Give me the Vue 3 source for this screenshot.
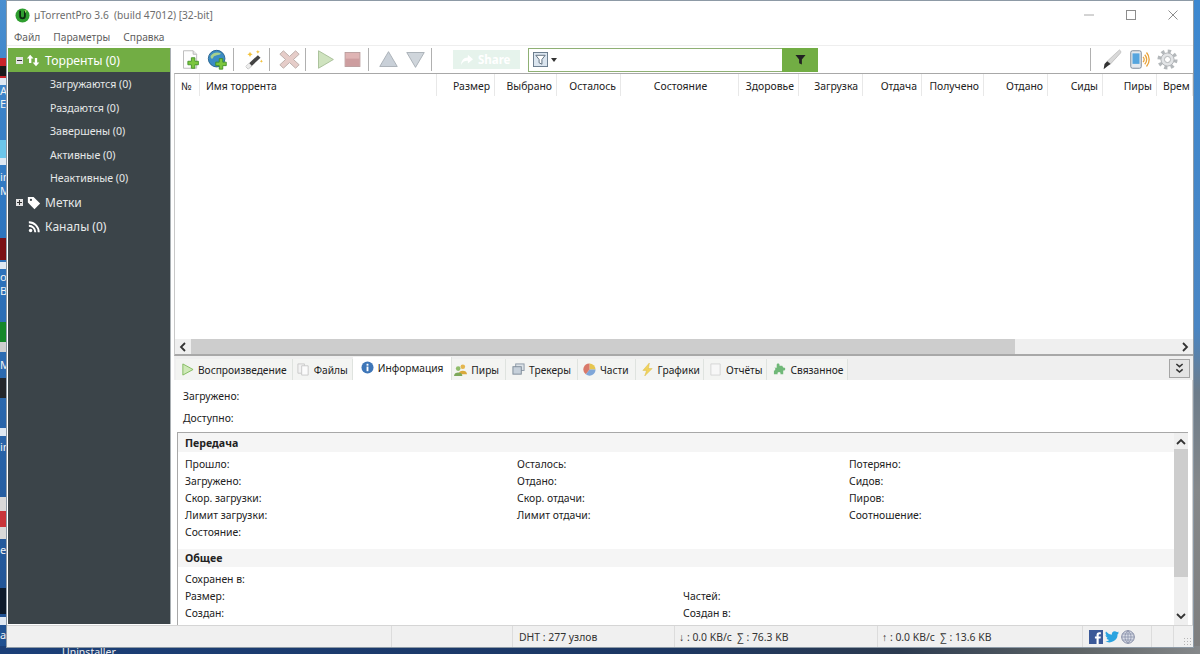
<script setup>
const sideItems = ['Загружаются (0)', 'Раздаются (0)', 'Завершены (0)', 'Активные (0)', 'Неактивные (0)']

const columns = [
  { title: '№', width: 25, align: 'left' },
  { title: 'Имя торрента', width: 237, align: 'left' },
  { title: 'Размер', width: 58 },
  { title: 'Выбрано', width: 62 },
  { title: 'Осталось', width: 64 },
  { title: 'Состояние', width: 118, align: 'center' },
  { title: 'Здоровье', width: 60 },
  { title: 'Загрузка', width: 64 },
  { title: 'Отдача', width: 59 },
  { title: 'Получено', width: 62 },
  { title: 'Отдано', width: 64 },
  { title: 'Сиды', width: 55 },
  { title: 'Пиры', width: 54 },
  { title: 'Врем', width: 36, align: 'left' }
]

const tabs = [
  { key: 'play', title: 'Воспроизведение' },
  { key: 'files', title: 'Файлы' },
  { key: 'info', title: 'Информация', active: true },
  { key: 'peers', title: 'Пиры' },
  { key: 'trackers', title: 'Трекеры' },
  { key: 'pieces', title: 'Части' },
  { key: 'graphs', title: 'Графики' },
  { key: 'reports', title: 'Отчёты' },
  { key: 'related', title: 'Связанное' }
]

const transfer = [
  ['Прошло:', 'Осталось:', 'Потеряно:'],
  ['Загружено:', 'Отдано:', 'Сидов:'],
  ['Скор. загрузки:', 'Скор. отдачи:', 'Пиров:'],
  ['Лимит загрузки:', 'Лимит отдачи:', 'Соотношение:'],
  ['Состояние:', '', '']
]

const general = [
  ['Сохранен в:', ''],
  ['Размер:', 'Частей:'],
  ['Создан:', 'Создан в:']
]

// bits of desktop icons that stick out left of the window
const deskBits = [
  { top: 58, h: 20, color: '#c8242a' },
  { top: 66, h: 10, color: '#1a1a1a' },
  { top: 78, h: 7, color: '#dfe8f2' },
  { top: 140, h: 18, color: '#6cc6ea' },
  { top: 158, h: 7, color: '#dfe8f2' },
  { top: 238, h: 22, color: '#7a1015' },
  { top: 262, h: 7, color: '#dfe8f2' },
  { top: 322, h: 20, color: '#15882a' },
  { top: 342, h: 10, color: '#cfcfcf' },
  { top: 378, h: 20, color: '#23262b' },
  { top: 428, h: 8, color: '#dfe8f2' },
  { top: 497, h: 14, color: '#d9d9d9' },
  { top: 511, h: 16, color: '#c9353a' },
  { top: 527, h: 12, color: '#d9d9d9' },
  { top: 588, h: 26, color: '#0d1a2a' },
  { top: 617, h: 8, color: '#dfe8f2' }
]
</script>

<template>
  <div class="desktop">
    <div class="wall-left"></div>
    <div class="wall-right"></div>
    <div class="wall-bottom"></div>
    <i
      v-for="bit in deskBits"
      :key="bit.top"
      class="desk-bit"
      :style="{ top: bit.top + 'px', height: bit.h + 'px', background: bit.color }"
    ></i>
    <span class="desk-label" style="top: 84px">A</span>
    <span class="desk-label" style="top: 97px">Ex</span>
    <span class="desk-label" style="top: 170px">in</span>
    <span class="desk-label" style="top: 184px">M</span>
    <span class="desk-label" style="top: 270px">ob</span>
    <span class="desk-label" style="top: 284px">B</span>
    <span class="desk-label" style="top: 358px">M</span>
    <span class="desk-label" style="top: 440px">in</span>
    <span class="desk-label" style="top: 543px">et</span>
    <span class="desk-label" style="top: 628px">a</span>
    <span class="uninstaller">Uninstaller</span>

    <div class="window">
      <header class="titlebar">
        <svg class="logo" viewBox="0 0 16 16">
          <circle cx="8" cy="8" r="7.5" fill="#2f9e2f" />
          <path d="M4.5 3v5.500a3.500 3.500 0 0 0 7 0V3H9.600v5.500a1.600 1.600 0 0 1-3.200 0V3z" fill="#0c2a10" />
          <path d="M10 2.500h2.500l-1.200 3z" fill="#a5dc64" />
        </svg>
        <span class="app-title">µTorrentPro 3.6&nbsp; (build 47012) [32-bit]</span>
        <div class="win-buttons">
          <svg viewBox="0 0 12 12"><path d="M1 6h10" stroke="#a8a8a8" /></svg>
          <svg viewBox="0 0 12 12"><rect x="1.5" y="1.5" width="9" height="9" fill="none" stroke="#8d8d8d" /></svg>
          <svg viewBox="0 0 12 12"><path d="M1.500 1.500l9 9M10.500 1.500l-9 9" stroke="#8d8d8d" /></svg>
        </div>
      </header>

      <nav class="menu">
        <span>Файл</span>
        <span>Параметры</span>
        <span>Справка</span>
      </nav>

      <div class="main">
        <aside class="sidebar">
          <div class="side-head">
            <span class="tree-box"><i></i></span>
            <svg class="side-arrows" viewBox="0 0 18 16">
              <path d="M5 1l4 4.500H6.400V11H3.600V5.500H1zM12 15l-4-4.500h2.600V5h2.800v5.500H16z" fill="#fff" />
            </svg>
            <span>Торренты (0)</span>
          </div>
          <ul class="side-list">
            <li v-for="item in sideItems" :key="item">{{ item }}</li>
          </ul>
          <div class="side-row side-labels">
            <span class="tree-box dark"><i></i><b></b></span>
            <svg class="side-tag" viewBox="0 0 16 16">
              <path d="M1 1h6.500L15 8.500 8.500 15 1 7.500z" fill="#fff" />
              <circle cx="4.500" cy="4.500" r="1.300" fill="#3b4449" />
            </svg>
            <span>Метки</span>
          </div>
          <div class="side-row side-feeds">
            <svg class="side-rss" viewBox="0 0 14 14">
              <circle cx="3" cy="11" r="2" fill="#fff" />
              <path d="M1 5.500a7.500 7.500 0 0 1 7.500 7.500M1 1.500A11.500 11.500 0 0 1 12.500 13" fill="none" stroke="#fff" stroke-width="2.300" />
            </svg>
            <span>Каналы (0)</span>
          </div>
        </aside>

        <section class="content">
          <div class="toolbar">
            <svg class="tool" viewBox="0 0 24 24">
              <path d="M4 2h11l4 4v16H4z" fill="#fdfdfd" stroke="#b5b5b5" />
              <path d="M15 2v4h4" fill="#e8e8e8" stroke="#b5b5b5" />
              <path d="M13 10h4v4h4v4h-4v4h-4v-4H9v-4h4z" fill="#7cc63e" stroke="#3f8f25" />
            </svg>
            <svg class="tool" viewBox="0 0 24 24">
              <circle cx="11" cy="11" r="9.500" fill="#3b8cc4" stroke="#1f5c88" />
              <path d="M4 8c3-4 8-5 12-3-2 3-8 1-9 5-1 2-3 1-3-2z" fill="#a8d08d" />
              <path d="M14 11h4v4h4v4h-4v4h-4v-4h-4v-4h4z" fill="#7cc63e" stroke="#3f8f25" />
            </svg>
            <i class="sep"></i>
            <svg class="tool" viewBox="0 0 24 24">
              <path d="M3 20L17 7l3 3L6 23z" fill="#444" />
              <path d="M3 20l4-4 3 3-4 4z" fill="#ececec" />
              <path d="M8 3l1 2 2 1-2 1-1 2-1-2-2-1 2-1zM17 1l.7 1.500 1.500.7-1.500.7L17 5.500l-.7-1.600-1.500-.7 1.500-.7zM21 12l.6 1.300 1.300.6-1.300.6-.6 1.300-.6-1.300-1.300-.6 1.300-.6z" fill="#f2c13a" />
            </svg>
            <i class="sep"></i>
            <svg class="tool" viewBox="0 0 24 24">
              <path d="M5 2l7 6.500L19 2l4 4-6.500 6 6.500 6-4 4-7-6.500L5 22l-4-4 6.500-6L1 6z" fill="#e6cdc9" stroke="#b8aaa6" />
            </svg>
            <i class="sep"></i>
            <svg class="tool" viewBox="0 0 24 24">
              <path d="M4 2l17 10L4 22z" fill="#cfe3bf" stroke="#a4bc93" />
            </svg>
            <svg class="tool" viewBox="0 0 24 24">
              <rect x="3.500" y="4" width="17" height="16" fill="#dfb4b4" stroke="#b79a9a" />
              <path d="M4 11h16v8.500H4z" fill="#cd9d9f" />
            </svg>
            <i class="sep"></i>
            <svg class="tool" viewBox="0 0 24 24">
              <path d="M12 3l10 17H2z" fill="#c9d0d8" stroke="#a5abb2" />
            </svg>
            <svg class="tool" viewBox="0 0 24 24">
              <path d="M12 21L2 4h20z" fill="#cfd5db" stroke="#a5abb2" />
            </svg>
            <i class="sep"></i>
            <div class="share">
              <svg viewBox="0 0 16 14">
                <path d="M9 1l6 5-6 5V8C5 8 3 9 1 13c0-5 3-9 8-9z" fill="#fff" />
              </svg>
              <span>Share</span>
            </div>
            <div class="search">
              <div class="search-kind">
                <svg viewBox="0 0 16 16">
                  <rect x="0.500" y="0.500" width="15" height="15" fill="#dbe5ef" stroke="#67788a" />
                  <path d="M3 3.500h10L9.500 8v5l-3-1.500V8z" fill="#fff" stroke="#5b6b7b" />
                </svg>
                <i></i>
              </div>
              <input class="search-input" type="text" />
              <button class="search-btn">
                <svg viewBox="0 0 12 12">
                  <path d="M0.500 1h11L7.500 6v5.500l-3-1.500V6z" fill="#222" />
                </svg>
              </button>
            </div>
            <div class="tool-right">
              <i class="sep"></i>
              <svg class="tool" viewBox="0 0 24 24">
                <path d="M21 1c2 1 2 3 1 4L11 17l-4-3z" fill="#d9d9d9" stroke="#999" stroke-width="0.500" />
                <path d="M7 14l4 3-3 2-5 4 1-6z" fill="#333" />
              </svg>
              <svg class="tool" viewBox="0 0 24 24">
                <rect x="2" y="2" width="12" height="20" rx="2" fill="#e4e9ee" stroke="#6f7f8f" />
                <rect x="4" y="5" width="8" height="12" fill="#55a5de" />
                <path d="M16 9a4 4 0 0 1 0 6M18 6.500a8 8 0 0 1 0 11M20 4a12 12 0 0 1 0 16" fill="none" stroke="#e8a33c" stroke-width="1.500" />
              </svg>
              <svg class="tool" viewBox="0 0 24 24">
                <circle cx="12" cy="12" r="9.500" fill="none" stroke="#b4b8bb" stroke-width="4" stroke-dasharray="3.730 3.730" />
                <circle cx="12" cy="12" r="7.500" fill="#e2e4e6" stroke="#a9adb0" />
                <circle cx="12" cy="12" r="3.500" fill="#fff" stroke="#a9adb0" />
              </svg>
            </div>
          </div>

          <div class="list">
            <div class="list-head">
              <div
                v-for="col in columns"
                :key="col.title"
                class="col"
                :class="col.align"
                :style="{ width: col.width + 'px' }"
              >{{ col.title }}</div>
            </div>
            <div class="list-body"></div>
            <div class="hscroll">
              <svg class="arrow" viewBox="0 0 16 14"><path d="M10 3L6 7l4 4" fill="none" stroke="#333" stroke-width="1.800" /></svg>
              <div class="hthumb"></div>
              <svg class="arrow end" viewBox="0 0 16 14"><path d="M6 3l4 4-4 4" fill="none" stroke="#333" stroke-width="1.800" /></svg>
            </div>
          </div>

          <div class="tabs">
            <div v-for="tab in tabs" :key="tab.key" class="tab" :class="[tab.key, { active: tab.active }]">
              <svg class="tab-icon" viewBox="0 0 14 14">
                <path v-if="tab.key === 'play'" d="M2 1l11 6-11 6z" fill="#cfe9b8" stroke="#7fba5c" />
                <g v-else-if="tab.key === 'files'">
                  <path d="M1 1h7v10H1z" fill="#f2f2f2" stroke="#c9c9c9" />
                  <path d="M5 3h7v10H5z" fill="#fbfbfb" stroke="#c9c9c9" />
                </g>
                <g v-else-if="tab.key === 'info'">
                  <circle cx="7" cy="7" r="6.500" fill="#3e76b8" />
                  <rect x="6" y="6" width="2" height="5" fill="#fff" />
                  <rect x="6" y="3" width="2" height="2" fill="#fff" />
                </g>
                <g v-else-if="tab.key === 'peers'">
                  <circle cx="9.500" cy="4" r="2.500" fill="#e4b64e" />
                  <path d="M5 12c0-5 9-5 9 0z" fill="#d9a93a" />
                  <circle cx="4.500" cy="6" r="2.500" fill="#8fbd6a" />
                  <path d="M0 14c0-5 9-5 9 0z" fill="#7da85a" />
                </g>
                <g v-else-if="tab.key === 'trackers'">
                  <rect x="4" y="1" width="9" height="7" fill="#dde3e8" stroke="#8b98a5" />
                  <rect x="1" y="4" width="9" height="8" fill="#c6d0da" stroke="#7d8b98" />
                </g>
                <g v-else-if="tab.key === 'pieces'">
                  <path d="M7 7V0.500A6.500 6.500 0 0 1 13.500 7z" fill="#e6c650" />
                  <path d="M7 7h6.500A6.500 6.500 0 0 1 3 12.200z" fill="#7fa6d8" />
                  <path d="M7 7l-4 5.200A6.500 6.500 0 0 1 7 0.500z" fill="#d9796a" />
                </g>
                <path v-else-if="tab.key === 'graphs'" d="M9 0L2 8h4l-2 6 8-8H8z" fill="#f1d35c" stroke="#d7b63f" stroke-width="0.500" />
                <path v-else-if="tab.key === 'reports'" d="M2 1h10v12H2z" fill="#f7f7f7" stroke="#d5d5d5" />
                <path v-else d="M1 5h3V2c0-2 3-2 3 0v1h3l1 2c3-1 3 4 0 3v4H8c1-3-4-3-3 0H1V8c2 1 2-4 0-3z" fill="#70b878" />
              </svg>
              <span>{{ tab.title }}</span>
            </div>
            <button class="collapse">
              <svg viewBox="0 0 10 12">
                <path d="M1.500 1L5 4l3.500-3M1.500 7L5 10l3.500-3" fill="none" stroke="#333" stroke-width="1.700" />
              </svg>
            </button>
          </div>

          <div class="panel">
            <div class="progress-row">Загружено:</div>
            <div class="progress-row">Доступно:</div>
            <div class="details">
              <div class="details-body">
                <h4>Передача</h4>
                <div class="grid-three">
                  <template v-for="(row, i) in transfer" :key="i">
                    <span v-for="(cell, j) in row" :key="j">{{ cell }}</span>
                  </template>
                </div>
                <h4 class="second">Общее</h4>
                <div class="grid-two">
                  <template v-for="(row, i) in general" :key="i">
                    <span v-for="(cell, j) in row" :key="j">{{ cell }}</span>
                  </template>
                </div>
              </div>
              <div class="vscroll">
                <svg viewBox="0 0 14 14"><path d="M3 9l4-4 4 4" fill="none" stroke="#333" stroke-width="1.800" /></svg>
                <div class="vthumb"></div>
                <svg viewBox="0 0 14 14"><path d="M3 5l4 4 4-4" fill="none" stroke="#333" stroke-width="1.800" /></svg>
              </div>
            </div>
          </div>
        </section>
      </div>

      <footer class="status">
        <div class="cell" style="width: 385px"></div>
        <div class="cell" style="width: 121px"></div>
        <div class="cell dht" style="width: 162px">DHT : 277 узлов</div>
        <div class="cell" style="width: 203px">↓ : 0.0 KB/c&nbsp; ∑ : 76.3 KB</div>
        <div class="cell" style="width: 205px">↑ : 0.0 KB/c&nbsp; ∑ : 13.6 KB</div>
        <div class="cell social" style="width: 69px">
          <svg viewBox="0 0 13 13">
            <rect width="13" height="13" fill="#3b5998" />
            <path d="M9 13V8h1.700l.3-2H9V5c0-.6.2-1 1-1h1V2.200C10.500 2 10 2 9.500 2 7.800 2 7 3 7 4.700V6H5.500v2H7v5z" fill="#fff" />
          </svg>
          <svg viewBox="0 0 14 12">
            <path d="M14 1.500c-.5.200-1 .4-1.600.5.600-.4 1-.9 1.200-1.600-.6.300-1.200.6-1.800.7A2.900 2.900 0 0 0 6.900 3.700 8 8 0 0 1 1 .6a2.900 2.900 0 0 0 .9 3.800c-.5 0-.9-.1-1.300-.4 0 1.400 1 2.600 2.300 2.900-.4.100-.9.100-1.300 0 .4 1.200 1.400 2 2.700 2A5.800 5.800 0 0 1 0 10.100 8.200 8.200 0 0 0 12.600 3.200c.6-.4 1-.9 1.400-1.700z" fill="#2aa3e0" />
          </svg>
          <svg viewBox="0 0 14 14">
            <circle cx="7" cy="7" r="6.300" fill="#d8dce6" stroke="#8289a3" />
            <path d="M7 .7v12.600M.7 7h12.600M1.500 4h11M1.500 10h11M7 .7c-4 3-4 9.600 0 12.600M7 .7c4 3 4 9.600 0 12.600" fill="none" stroke="#8289a3" stroke-width="0.700" />
          </svg>
        </div>
        <div class="cell" style="width: 22px"></div>
        <div class="grip"></div>
      </footer>
    </div>
  </div>
</template>

<style scoped>
.desktop {
  position: relative;
  width: 1200px;
  height: 654px;
  overflow: hidden;
  font-family: "Noto Sans", "Open Sans", sans-serif;
  font-size: 10.400px;
  color: #222;
  background: #6f8499;
}

.wall-left {
  position: absolute;
  left: 0;
  top: 0;
  width: 8px;
  height: 654px;
  background: linear-gradient(180deg, #4a8fd0 0, #2f78c2 30%, #2a68ae 60%, #1f4f8f 100%);
}

.wall-right {
  position: absolute;
  right: 0;
  top: 0;
  width: 8px;
  height: 654px;
  background: linear-gradient(180deg, #3d88d0 0, #4a86c4 50%, #6d7c8a 60%, #85888a 75%, #7e7e7e 100%);
}

.wall-bottom {
  position: absolute;
  left: 0;
  bottom: 0;
  width: 1200px;
  height: 8px;
  background: linear-gradient(90deg, #1b3f78 0, #1c3763 55%, #2c3b50 75%, #5e6466 90%, #85888a 100%);
}

.desk-bit {
  position: absolute;
  left: 0;
  width: 7px;
}

.desk-label {
  position: absolute;
  left: 0;
  width: 7px;
  overflow: hidden;
  color: #f2f2f2;
  font-size: 11px;
  line-height: 13px;
}

.uninstaller {
  position: absolute;
  left: 62px;
  top: 646px;
  color: #eee;
  font-size: 10.500px;
  line-height: 13px;
}

.window {
  position: absolute;
  left: 7px;
  top: 1px;
  width: 1186px;
  height: 646px;
  background: #fff;
  box-shadow: 0 0 0 1px #8d9aa6;
  display: flex;
  flex-direction: column;
}

.titlebar {
  height: 28px;
  display: flex;
  align-items: center;
  padding-left: 8px;
  flex: none;
}

.logo {
  width: 15px;
  height: 15px;
  margin-right: 4px;
}

.app-title {
  color: #6d6d6d;
  font-size: 10.200px;
}

.win-buttons {
  margin-left: auto;
  display: flex;
  gap: 30px;
  padding-right: 14px;
}

.win-buttons svg {
  width: 12px;
  height: 12px;
}

.menu {
  height: 16px;
  display: flex;
  gap: 13px;
  padding-left: 7px;
  align-items: center;
  color: #5e5e5e;
  font-size: 10.200px;
  flex: none;
}

.main {
  flex: 1;
  display: flex;
  min-height: 0;
  border-top: 1px solid #eeeeee;
}

.sidebar {
  width: 163px;
  box-sizing: border-box;
  margin: 2px 0 1px 1px;
  background: #3b4449;
  color: #e6e8e8;
  border-right: 1px solid #a9afb3;
  flex: none;
  font-size: 10.600px;
}

.side-head {
  height: 24px;
  background: #72ad44;
  color: #fff;
  display: flex;
  align-items: center;
  font-size: 12.200px;
  padding-left: 8px;
}

.tree-box {
  position: relative;
  width: 7px;
  height: 7px;
  background: #e4e4e4;
  flex: none;
}

.tree-box i {
  position: absolute;
  left: 1px;
  top: 3px;
  width: 5px;
  height: 1px;
  background: #333;
}

.tree-box b {
  position: absolute;
  left: 3px;
  top: 1px;
  width: 1px;
  height: 5px;
  background: #333;
}

.side-arrows {
  width: 15px;
  height: 15px;
  margin: 0 4px 0 3px;
}

.side-list {
  list-style: none;
  margin: 0;
  padding: 1px 0 0;
}

.side-list li {
  height: 23.600px;
  line-height: 23px;
  padding-left: 42px;
}

.side-row {
  height: 24px;
  display: flex;
  align-items: center;
  font-size: 12px;
}

.side-labels {
  padding-left: 8px;
}

.side-tag {
  width: 14px;
  height: 14px;
  margin: 0 4px 0 4px;
}

.side-feeds {
  padding-left: 20px;
}

.side-rss {
  width: 12px;
  height: 12px;
  margin-right: 5px;
}

.content {
  flex: 1;
  min-width: 0;
  padding-left: 3px;
  display: flex;
  flex-direction: column;
}

.toolbar {
  height: 27px;
  display: flex;
  align-items: center;
  padding-left: 3px;
  flex: none;
}

.tool {
  width: 21px;
  height: 21px;
  margin: 0 3px;
  flex: none;
}

.sep {
  width: 1px;
  height: 23px;
  margin: 0 6px 0 2px;
  background: #b0b0b0;
  flex: none;
}

.share {
  width: 67px;
  height: 19px;
  margin-left: 15px;
  background: #e6f3ec;
  color: #fff;
  display: flex;
  align-items: center;
  gap: 4px;
  padding-left: 7px;
  box-sizing: border-box;
  font-weight: 700;
  font-size: 11.500px;
  flex: none;
}

.share svg {
  width: 14px;
  height: 12px;
}

.search {
  width: 290px;
  height: 24px;
  margin-left: 8px;
  display: flex;
  align-items: stretch;
  flex: none;
}

.search-kind {
  display: flex;
  align-items: center;
  gap: 3px;
  padding-left: 4px;
  border: 1px solid #8fb074;
  border-right: none;
}

.search-kind svg {
  width: 15px;
  height: 15px;
}

.search-kind i {
  width: 0;
  height: 0;
  border: 3px solid transparent;
  border-top: 4px solid #333;
  border-bottom: none;
}

.search-input {
  flex: 1;
  min-width: 0;
  border: 1px solid #8fb074;
  border-left: none;
  border-right: none;
  outline: none;
  padding: 0;
}

.search-btn {
  width: 36px;
  padding: 0;
  border: none;
  background: #72ad44;
  display: flex;
  align-items: center;
  justify-content: center;
}

.search-btn svg {
  width: 11px;
  height: 11px;
}

.tool-right {
  margin-left: auto;
  display: flex;
  align-items: center;
  padding-right: 12px;
}

.tool-right .tool {
  margin: 0 3.500px;
}

.list {
  height: 280px;
  border-top: 1px solid #a8a8a8;
  border-left: 1px solid #c8c8c8;
  border-bottom: 2px solid #a8a8a8;
  display: flex;
  flex-direction: column;
  flex: none;
}

.list-head {
  height: 23px;
  display: flex;
  overflow: hidden;
  flex: none;
}

.col {
  box-sizing: border-box;
  flex: none;
  height: 22px;
  line-height: 25px;
  text-align: right;
  padding: 0 4px 0 6px;
  border-right: 1px solid #e8e8e8;
  white-space: nowrap;
  overflow: hidden;
}

.col.left {
  text-align: left;
}

.col.center {
  text-align: center;
}

.list-body {
  flex: 1;
}

.hscroll {
  height: 15px;
  background: #efefef;
  display: flex;
  align-items: center;
  flex: none;
}

.arrow {
  width: 16px;
  height: 14px;
  flex: none;
}

.arrow.end {
  margin-left: auto;
}

.hthumb {
  width: 824px;
  height: 15px;
  background: #cdcdcd;
  flex: none;
}

.tabs {
  position: relative;
  height: 24px;
  background: #efefef;
  display: flex;
  align-items: flex-end;
  padding-left: 2px;
  font-size: 10.200px;
  flex: none;
}

.tab {
  height: 21px;
  display: flex;
  align-items: center;
  gap: 4px;
  padding: 0 4px;
  background: #f3f4f2;
  border-right: 1px solid #dfe3df;
}

.tab.play {
  padding: 0 5px;
}

.tab.peers {
  padding: 0 6px 0 2px;
}

.tab.trackers {
  padding: 0 6px;
}

.tab.pieces {
  padding: 0 6px 0 5px;
}

.tab.graphs {
  padding: 0 3px 0 5px;
}

.tab.reports {
  padding: 0 4px 0 5px;
}

.tab.related {
  padding: 0 4px 0 6px;
}

.tab.active {
  height: 23px;
  background: #fff;
  padding: 0 8px 2px;
  box-sizing: border-box;
}

.tab-icon {
  width: 13px;
  height: 13px;
  flex: none;
}

.collapse {
  position: absolute;
  right: 3px;
  top: 3px;
  width: 21px;
  height: 19px;
  padding: 0;
  border: 1px solid #a5a5a5;
  background: #e4e4e4;
  display: flex;
  align-items: center;
  justify-content: center;
}

.collapse svg {
  width: 9px;
  height: 11px;
}

.panel {
  flex: 1;
  min-height: 0;
  padding: 0 4px 0 3px;
  display: flex;
  flex-direction: column;
  border-right: 1px solid #d0d0d0;
}

.progress-row {
  height: 22px;
  line-height: 22px;
  padding-left: 6px;
  flex: none;
}

.progress-row:first-child {
  margin-top: 5px;
}

.details {
  flex: 1;
  min-height: 0;
  display: flex;
  margin-top: 3px;
  border-top: 1px solid #a8a8a8;
  border-left: 1px solid #a8a8a8;
}

.details-body {
  flex: 1;
  min-width: 0;
  overflow: hidden;
}

.details-body h4 {
  margin: 0;
  height: 19px;
  line-height: 21px;
  padding-left: 7px;
  background: #f5f5f5;
  font-size: 10.600px;
  font-weight: 700;
}

.details-body h4.second {
  height: 18px;
  line-height: 18px;
}

.grid-three,
.grid-two {
  display: grid;
  grid-auto-rows: 17.100px;
  line-height: 17px;
  padding-left: 7px;
}

.grid-three {
  grid-template-columns: 332px 332px 1fr;
  padding-top: 4px;
  padding-bottom: 8px;
}

.grid-two {
  grid-template-columns: 498px 1fr;
  grid-auto-rows: 17px;
  padding-top: 4px;
}

.vscroll {
  width: 14px;
  background: #efefef;
  display: flex;
  flex-direction: column;
  align-items: center;
  flex: none;
  padding: 2px 0;
  box-sizing: border-box;
}

.vscroll svg {
  width: 14px;
  height: 14px;
  flex: none;
}

.vthumb {
  width: 14px;
  height: 128px;
  background: #cdcdcd;
}

.vscroll svg:last-child {
  margin-top: auto;
}

.status {
  height: 21px;
  background: #f0f0f0;
  border-top: 1px solid #d5d5d5;
  display: flex;
  flex: none;
  position: relative;
  color: #333;
}

.cell {
  box-sizing: border-box;
  border-right: 1px solid #dcdcdc;
  display: flex;
  align-items: center;
  padding-left: 4px;
  white-space: nowrap;
  flex: none;
}

.cell.dht {
  padding-left: 6px;
}

.social {
  gap: 2px;
  padding-left: 6px;
}

.social svg {
  width: 14px;
  height: 14px;
}

.grip {
  position: absolute;
  right: 2px;
  bottom: 2px;
  width: 8px;
  height: 8px;
  background: radial-gradient(circle, #b5b5b5 1px, transparent 1px) 0 0 / 3px 3px;
}
</style>

<style>
html, body {
  margin: 0;
  background: #1b2f4a;
}
</style>
